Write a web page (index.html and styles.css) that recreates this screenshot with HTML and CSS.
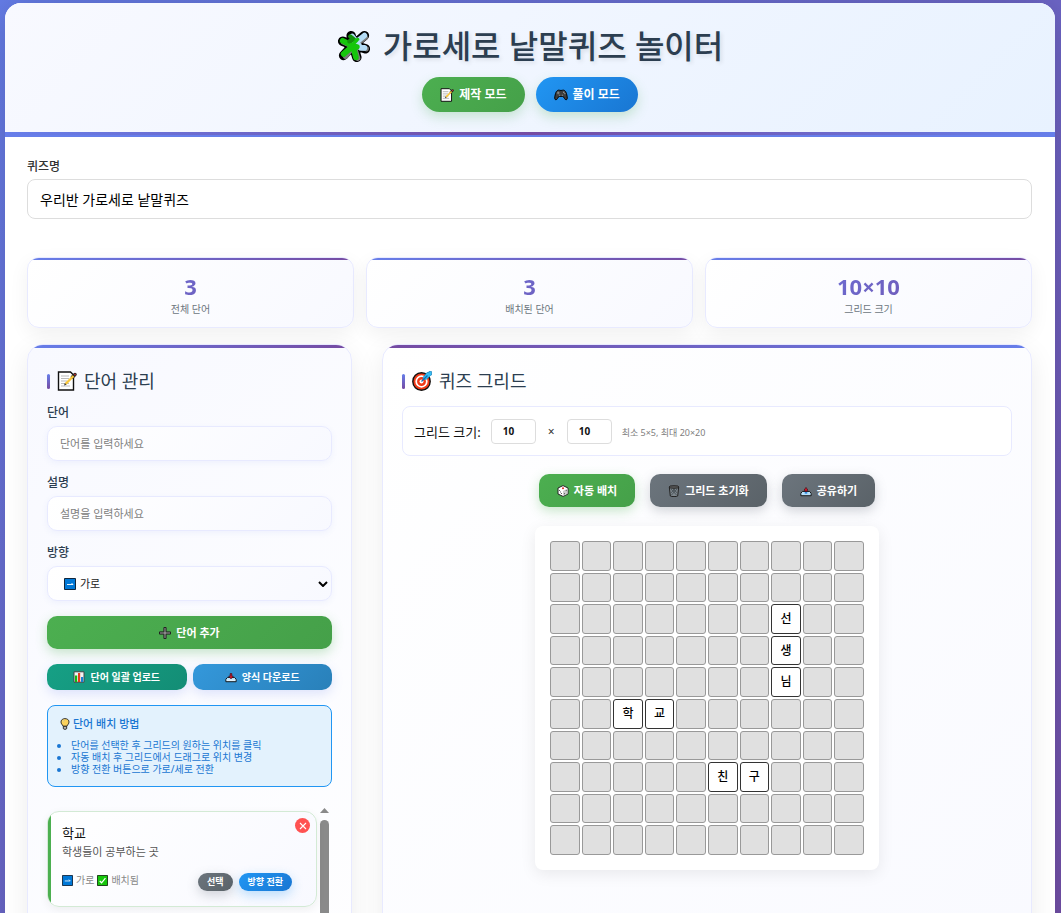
FILE: index.html
```html
<!DOCTYPE html>
<html lang="ko">
<head>
<meta charset="utf-8">
<meta name="viewport" content="width=device-width, initial-scale=1">
<title>가로세로 낱말퀴즈 놀이터</title>
<link rel="stylesheet" href="styles.css">
</head>
<body>
<svg class="defs" aria-hidden="true">
  <symbol id="i-puzzle" viewBox="0 0 36 36">
    <g fill="none" stroke-linecap="round" stroke-linejoin="round">
      <path stroke="#000" stroke-width="10" d="M6 13 17 17 15 7M17 17 29 7M17 17 30 21M17 17 21 30M17 17 7 28"/>
      <path fill="#000" stroke="#000" stroke-width="4" d="M10 13 14 8 26 11 25 22 19 27 10 22Z"/>
      <path stroke="#7a7a7a" stroke-width="5.500" d="M7 14 18 19M18 18 31 21M18 18 22 31M18 18 9 29M18 18 30 9"/>
      <path stroke="#b4dcf5" stroke-width="6" d="M19 15 29 7M20 13 25 20 29 20M16 8 20 13"/>
      <path stroke="#16c60c" stroke-width="6" d="M6 12.500 15 17M17 18 20 30M17 18 7 26.500M14 17 21 19"/>
      <path stroke="#13910c" stroke-width="4.500" d="M14 8 18 11M13 13 16 12"/>
      <path stroke="#16c60c" stroke-width="3.500" d="M20 12 22 11M17 16 21 12"/>
    </g>
  </symbol>
  <symbol id="i-memo" viewBox="0 0 20 20">
    <path fill="#fff" stroke="#111" stroke-width="1.400" d="M1.500 1h12l3 3v15h-15Z"/>
    <path stroke="#bbb" stroke-width="1.200" d="M4 5h8M4 7.500h8M4 10h6M4 12.500h8M4 15h9"/>
    <path stroke="#222" stroke-width="3.400" stroke-linecap="round" d="m18 3.500-2.500 2.500"/>
    <path stroke="#f8c63a" stroke-width="2.400" d="m16.500 5-8 8"/>
    <path fill="#3b3b3b" d="m7 14.500.8-2.500 1.700 1.700Z"/><circle cx="18" cy="3.500" r="1" fill="#a33"/>
  </symbol>
  <symbol id="i-pad" viewBox="0 0 20 16">
    <path fill="#3c3c3c" stroke="#000" stroke-width="1.400" d="M5 1.500c2-1 3 0 5 0s3-1 5 0c2.500 1 4 8 4 11 0 3-3 3-4 .5L13 10H7l-2 3c-1 2.500-4 2.500-4-.5 0-3 1.500-10 4-11Z"/>
    <path stroke="#999" stroke-width="1.200" d="M4 5h4M6 3v4"/><circle cx="14" cy="4" r="1" fill="#aaa"/><circle cx="15.500" cy="6" r="1" fill="#999"/><circle cx="8" cy="8.500" r="1.200" fill="#777"/><circle cx="12" cy="8.500" r="1.200" fill="#777"/>
  </symbol>
  <symbol id="i-target" viewBox="0 0 20 20">
    <circle cx="9.500" cy="10.500" r="8.700" fill="#f03a17" stroke="#111" stroke-width="1.400"/>
    <circle cx="9.500" cy="10.500" r="5.300" fill="#f03a17" stroke="#fff" stroke-width="1.700"/>
    <circle cx="9.500" cy="10.500" r="2" fill="#fff"/>
    <path stroke="#1683c0" stroke-width=".7" fill="#35bdf2" d="m11 6.500 4-5 2 0v-1.200l2.500.2v3.500l-1 .5-4 3.700-3 .3Z"/>
    <path stroke="#0a6fb5" stroke-width="1.300" d="m9.500 10.500 6-6"/>
  </symbol>
  <symbol id="i-right" viewBox="0 0 12 12">
    <path fill="#0078d7" stroke="#10263d" stroke-width="1" d="M.5.5h11v11H.5Z"/>
    <path fill="none" stroke="#fff" stroke-width=".9" d="M3 6.500h6M7.500 5 9 6.500"/>
  </symbol>
  <symbol id="i-check" viewBox="0 0 12 12">
    <path fill="#16c60c" stroke="#10350e" stroke-width="1" d="M.5.5h11v11H.5Z"/>
    <path fill="none" stroke="#fff" stroke-width="1.300" d="m3 6.500 2 2 4.200-5"/>
  </symbol>
  <symbol id="i-plus" viewBox="0 0 12 12">
    <path fill="#8a8a8a" stroke="#222" stroke-width="1" d="M4.900.5h2.200v4.400h4.400v2.200H7.100v4.400H4.900V7.100H.5V4.900h4.400Z"/>
  </symbol>
  <symbol id="i-chart" viewBox="0 0 12 12">
    <path fill="#f4f4f4" stroke="#444" d="M1 .8h10v10.400H1Z"/>
    <path fill="#16b80c" d="M2 4.500h2.200V11H2Z"/><path fill="#e83a1c" d="M5 2h2.200v9H5Z"/><path fill="#1683d8" d="M8 6h2.200v5H8Z"/>
  </symbol>
  <symbol id="i-inbox" viewBox="0 0 14 12">
    <path fill="#b7e0fa" stroke="#111" stroke-width="1.100" stroke-linejoin="round" d="m1 8.500 2-2h8l2 2v3H1Z"/>
    <path fill="#fff" d="M2 9.200h10v1H2Z"/>
    <path fill="#d3162b" stroke="#39060c" stroke-width=".7" d="M6 2h2v3h1.700L7 8.200 4.300 5H6Z"/>
  </symbol>
  <symbol id="i-outbox" viewBox="0 0 14 12">
    <path fill="#b7e0fa" stroke="#111" stroke-width="1.100" stroke-linejoin="round" d="m1 8.500 2-2h8l2 2v3H1Z"/>
    <path fill="#3794e6" d="M5.500 7h3v2.300h-3Z"/>
    <path fill="#d3162b" stroke="#39060c" stroke-width=".7" d="M7 1.800 9.200 5H8.200v1.700H5.800V5H4.800Z"/>
  </symbol>
  <symbol id="i-bulb" viewBox="0 0 10 13">
    <path fill="#fbd25c" stroke="#222" d="M5 .7c5 0 5.200 4.800 2.800 6.800L7 9H3l-.8-1.500C-.2 5.500 0 .7 5 .7Z"/>
    <path fill="#bbb" stroke="#222" d="M3.200 9h3.600v2.600L5 12.400l-1.800-.8Z"/><path stroke="#fff3b8" d="M3 4c0-1 .7-1.800 1.500-2"/>
  </symbol>
  <symbol id="i-dice" viewBox="0 0 12 12">
    <path fill="#fff" stroke="#222" stroke-linejoin="round" d="m6 .6 5 2.400v6L6 11.400 1 9V3Z"/>
    <path fill="#ccc" d="m6 6 4.500-2.500v5.200L6 11Z"/><circle cx="6" cy="3.200" r="1" fill="#e02424"/>
    <path stroke="#333" stroke-linecap="round" d="M2.500 5.500v0M4.500 8.500v0M3.500 7v0M7.500 8.700v0M9.200 5.600v0"/>
  </symbol>
  <symbol id="i-trash" viewBox="0 0 12 12">
    <path fill="#7d868c" stroke="#222" d="m1.300 2 1 9c1.500.8 6 .8 7.400 0l1-9Z"/>
    <ellipse cx="6" cy="2" rx="5" ry="1.400" fill="#555" stroke="#222" stroke-width=".8"/>
    <path stroke="#394247" stroke-width=".7" d="m3 4 5.500 6M5 4l4.300 4M9 4l-5.500 6M7 4 2.800 8"/>
  </symbol>
  <symbol id="i-chevron" viewBox="0 0 10 6"><path fill="none" stroke="#000" stroke-width="2" d="m1 1 4 4 4-4"/></symbol>
  <symbol id="i-close" viewBox="0 0 8 8"><path stroke="#fff" stroke-width="1.100" d="m1 1 6 6M7 1 1 7"/></symbol>
</svg>

<div class="container">
  <header class="header">
    <h1 class="title"><svg class="title-icon" aria-hidden="true"><use href="#i-puzzle"/></svg>가로세로 낱말퀴즈 놀이터</h1>
    <nav class="modes">
      <button class="btn btn-mode green"><svg class="icon-md"><use href="#i-memo"/></svg>제작 모드</button>
      <button class="btn btn-mode blue"><svg class="icon-md"><use href="#i-pad"/></svg>풀이 모드</button>
    </nav>
  </header>

  <main class="content">
    <div class="quiz-name">
      <label class="name-label" for="quizName">퀴즈명</label>
      <input class="name-input" id="quizName" type="text" value="우리반 가로세로 낱말퀴즈">
    </div>

    <section class="stats">
      <div class="stat"><div class="stat-number">3</div><div class="stat-label">전체 단어</div></div>
      <div class="stat"><div class="stat-number">3</div><div class="stat-label">배치된 단어</div></div>
      <div class="stat"><div class="stat-number">10×10</div><div class="stat-label">그리드 크기</div></div>
    </section>

    <div class="workspace">
      <section class="panel words-panel">
        <h2 class="panel-title"><svg class="icon-lg" aria-hidden="true"><use href="#i-memo"/></svg>단어 관리</h2>
        <div class="field">
          <label class="field-label" for="word">단어</label>
          <input class="field-input" id="word" type="text" placeholder="단어를 입력하세요">
        </div>
        <div class="field">
          <label class="field-label" for="clue">설명</label>
          <input class="field-input" id="clue" type="text" placeholder="설명을 입력하세요">
        </div>
        <div class="field">
          <label class="field-label" for="direction">방향</label>
          <div class="select-wrap">
            <select class="field-input direction-select" id="direction"><option>가로</option><option>세로</option></select>
            <svg class="icon-sm select-icon" aria-hidden="true"><use href="#i-right"/></svg>
            <svg class="select-arrow" aria-hidden="true"><use href="#i-chevron"/></svg>
          </div>
        </div>
        <button class="btn green add-word"><svg class="icon-sm"><use href="#i-plus"/></svg>단어 추가</button>
        <div class="bulk">
          <button class="btn btn-bulk teal"><svg class="icon-sm"><use href="#i-chart"/></svg>단어 일괄 업로드</button>
          <button class="btn btn-bulk sky"><svg class="icon-sm"><use href="#i-inbox"/></svg>양식 다운로드</button>
        </div>
        <div class="info">
          <h3 class="info-title"><svg class="icon-sm" aria-hidden="true"><use href="#i-bulb"/></svg>단어 배치 방법</h3>
          <ul class="info-list">
            <li>단어를 선택한 후 그리드의 원하는 위치를 클릭</li>
            <li>자동 배치 후 그리드에서 드래그로 위치 변경</li>
            <li>방향 전환 버튼으로 가로/세로 전환</li>
          </ul>
        </div>
        <div class="list">
          <div class="cards">
            <article class="card">
              <button class="card-close" aria-label="삭제"><svg class="close-icon"><use href="#i-close"/></svg></button>
              <div class="card-word">학교</div>
              <div class="card-clue">학생들이 공부하는 곳</div>
              <div class="card-row">
                <div class="card-meta"><svg class="icon-xs"><use href="#i-right"/></svg>가로<svg class="icon-xs"><use href="#i-check"/></svg>배치됨</div>
                <div class="card-actions"><button class="btn btn-tiny gray">선택</button><button class="btn btn-tiny blue">방향 전환</button></div>
              </div>
            </article>
          </div>
          <div class="scrollbar" aria-hidden="true"><span class="scroll-up"></span><span class="scroll-thumb"></span></div>
        </div>
      </section>

      <section class="panel grid-panel">
        <h2 class="panel-title"><svg class="icon-lg" aria-hidden="true"><use href="#i-target"/></svg>퀴즈 그리드</h2>
        <div class="size-box">
          <label class="size-label" for="rows">그리드 크기:</label>
          <input class="size-input" id="rows" type="text" inputmode="numeric" value="10">
          <span class="times">×</span>
          <input class="size-input" id="cols" type="text" inputmode="numeric" aria-label="열 수" value="10">
          <span class="size-hint">최소 5×5, 최대 20×20</span>
        </div>
        <div class="tools">
          <button class="btn green"><svg class="icon-sm"><use href="#i-dice"/></svg>자동 배치</button>
          <button class="btn gray"><svg class="icon-sm"><use href="#i-trash"/></svg>그리드 초기화</button>
          <button class="btn gray"><svg class="icon-sm"><use href="#i-outbox"/></svg>공유하기</button>
        </div>
        <div class="board" id="board"></div>
      </section>
    </div>
  </main>
</div>
<script src="script.js"></script>
</body>
</html>
```
FILE: styles.css
```css
* { box-sizing: border-box; }
body {
  margin: 0;
  min-height: 100vh;
  padding: 3px 6px 20px 5px;
  background: linear-gradient(135deg, #667eea 0%, #764ba2 100%);
  font-family: "Noto Sans", "Noto Sans CJK KR", sans-serif;
  font-size: 12px;
  color: #333;
}
button, input, select { font-family: inherit; }
h1, h2, h3, ul { margin: 0; padding: 0; }
.defs { position: absolute; width: 0; height: 0; }
.container {
  background: #fff;
  border-radius: 16px;
  overflow: hidden;
  box-shadow: 0 0 40px rgba(0, 0, 0, 0.2);
}

.header {
  padding-top: 20px;
  text-align: center;
  background: linear-gradient(135deg, #f8f9ff 0%, #e8f2ff 100%);
  border-bottom: 2px solid #667eea;
}
.header::after {
  content: "";
  display: block;
  height: 3px;
  margin-top: 20px;
  background: linear-gradient(90deg, #667eea, #764ba2, #667eea);
}
.title {
  display: flex;
  justify-content: center;
  align-items: center;
  gap: 12px;
  font-size: 32px;
  line-height: 46px;
  font-weight: 500;
  color: #2c3e50;
  text-shadow: 2px 2px 4px rgba(0, 0, 0, 0.1);
}
.title-icon { width: 34px; height: 34px; }
.modes {
  display: flex;
  justify-content: center;
  gap: 11px;
  margin-top: 8px;
}

.btn {
  display: flex;
  justify-content: center;
  align-items: center;
  gap: 5px;
  height: 33px;
  padding: 0 18px;
  border: 0;
  border-radius: 10px;
  color: #fff;
  font-size: 11px;
  line-height: 16px;
  font-weight: 700;
  white-space: nowrap;
}
.btn-mode {
  height: 35px;
  border-radius: 18px;
  font-size: 12px;
}
.modes .btn { box-shadow: 0 5px 12px rgba(76, 175, 80, 0.25); }
.green {
  background: linear-gradient(135deg, #4caf50, #45a049);
  box-shadow: 0 4px 12px rgba(76, 175, 80, 0.3);
}
.blue {
  background: linear-gradient(135deg, #2196f3, #1976d2);
  box-shadow: 0 4px 12px rgba(33, 150, 243, 0.3);
}
.gray {
  background: linear-gradient(135deg, #6c757d, #5a6268);
  box-shadow: 0 4px 12px rgba(108, 117, 125, 0.3);
}
.teal { background: linear-gradient(135deg, #16a085, #138d75); }
.sky { background: linear-gradient(135deg, #3498db, #2980b9); }
.icon-lg { width: 20px; height: 20px; }
.icon-md { width: 14px; height: 14px; }
.icon-sm { width: 12px; height: 12px; }
.icon-xs { width: 11px; height: 11px; }

.content { padding: 20px 23px 22px 22px; }
.name-label {
  display: block;
  margin-bottom: 2px;
  font-size: 12px;
  line-height: 20px;
  font-weight: 500;
}
.name-input {
  display: block;
  width: 100%;
  height: 40px;
  padding: 0 12px;
  border: 1px solid #ddd;
  border-radius: 8px;
  background: #fff;
  color: #000;
  font-size: 14px;
}

.stats {
  display: grid;
  grid-template-columns: repeat(3, 1fr);
  gap: 12px;
  margin: 38px 0 16px;
}
.stat {
  position: relative;
  overflow: hidden;
  padding: 14px 10px 10px;
  border: 1px solid #e8eaff;
  border-radius: 12px;
  background: linear-gradient(135deg, #fff, #f8f9ff);
  box-shadow: 0 6px 20px rgba(0, 0, 0, 0.06);
  text-align: center;
}
.stat::before {
  content: "";
  position: absolute;
  inset: 0 0 auto;
  height: 2px;
  background: linear-gradient(90deg, #667eea, #764ba2);
}
.stat-number {
  font-size: 22px;
  line-height: 28px;
  font-weight: 700;
  background: linear-gradient(135deg, #667eea, #764ba2);
  background-clip: text;
  -webkit-background-clip: text;
  color: transparent;
}
.stat-label {
  margin-top: 1px;
  font-size: 10px;
  line-height: 16px;
  color: #6c757d;
}

.workspace {
  display: grid;
  grid-template-columns: 1fr 2fr;
  gap: 30px;
}
.panel {
  position: relative;
  overflow: hidden;
  min-width: 0;
  padding: 22px 19px 19px;
  border: 1px solid #e8eaff;
  border-radius: 16px;
}
.workspace .panel { box-shadow: 0 8px 28px rgba(0, 0, 0, 0.08); }
.panel::before {
  content: "";
  position: absolute;
  inset: 0 0 auto;
  height: 3px;
  background: linear-gradient(90deg, #667eea, #764ba2);
}
.words-panel { background: linear-gradient(135deg, #f8f9ff, #fff); }
.grid-panel { background: linear-gradient(135deg, #fff, #f8f9ff); }
.grid-panel::before { background: linear-gradient(90deg, #764ba2, #667eea); }
.panel-title {
  display: flex;
  align-items: center;
  gap: 7px;
  font-size: 18px;
  line-height: 28px;
  font-weight: 400;
  color: #2c3e50;
}
.panel-title::before {
  content: "";
  width: 3px;
  height: 15px;
  border-radius: 2px;
  background: linear-gradient(180deg, #667eea, #764ba2);
}

.field { margin-top: 12px; }
.panel-title + .field { margin-top: 8px; }
.field-label {
  display: block;
  margin-bottom: 3px;
  font-size: 12px;
  line-height: 20px;
  font-weight: 500;
  color: #2c3e50;
}
.field-input {
  display: block;
  width: 100%;
  height: 35px;
  padding: 0 12px;
  border: 1px solid #e8eaff;
  border-radius: 10px;
  background: linear-gradient(135deg, #fff, #f8f9ff);
  box-shadow: 0 2px 6px rgba(102, 126, 234, 0.08);
  color: #222;
  font-size: 11px;
}
.field-input::placeholder { color: #808080; }
.select-wrap { position: relative; }
.direction-select {
  appearance: none;
  padding-left: 32px;
}
.select-icon, .select-arrow {
  position: absolute;
  top: 0;
  bottom: 0;
  margin: auto 0;
  pointer-events: none;
}
.select-icon { left: 17px; }
.select-arrow { right: 4px; width: 10px; height: 6px; }
.add-word { width: 100%; margin-top: 15px; }
.bulk {
  display: grid;
  grid-template-columns: 1fr 1fr;
  gap: 6px;
  margin-top: 15px;
}
.btn-bulk {
  height: 26px;
  padding: 0 8px;
  font-size: 10px;
  box-shadow: 0 4px 12px rgba(102, 126, 234, 0.2);
}

.info {
  margin-top: 15px;
  padding: 10px 11px 11px;
  border: 1px solid #2196f3;
  border-radius: 8px;
  background: #e3f2fd;
  color: #1976d2;
}
.info-title {
  display: flex;
  align-items: center;
  gap: 2px;
  font-size: 11px;
  line-height: 16px;
  font-weight: 500;
}
.info-list {
  margin-top: 7px;
  padding-left: 12px;
  font-size: 10px;
  line-height: 12px;
}

.list {
  display: flex;
  gap: 3px;
  height: 320px;
  margin-top: 18px;
  padding-right: 3px;
}
.cards { flex: 1; padding-top: 6px; }
.card {
  position: relative;
  padding: 12px 24px 15px 14px;
  border: 1px solid #d3ead5;
  border-radius: 12px;
  background: linear-gradient(135deg, #fff, #f8f9ff);
  box-shadow: 0 3px 10px rgba(0, 0, 0, 0.06);
  overflow: hidden;
}
.card::before {
  content: "";
  position: absolute;
  inset: 0 auto 0 0;
  width: 3px;
  background: #4caf50;
}
.card-close {
  position: absolute;
  top: 6px;
  right: 6px;
  display: grid;
  place-items: center;
  width: 15px;
  height: 15px;
  padding: 0;
  border: 0;
  border-radius: 50%;
  background: #ff5252;
}
.close-icon { width: 8px; height: 8px; }
.card-word {
  font-size: 13px;
  line-height: 18px;
  font-weight: 400;
  color: #111;
}
.card-clue {
  font-size: 11px;
  line-height: 20px;
  color: #555;
}
.card-row {
  display: flex;
  justify-content: space-between;
  margin-top: 11px;
}
.card-meta {
  display: flex;
  align-items: center;
  gap: 3px;
  height: 14px;
  font-size: 10px;
  line-height: 14px;
  color: #888;
}
.card-actions { display: flex; gap: 6px; }
.btn-tiny {
  height: 18px;
  padding: 0 9px;
  border-radius: 9px;
  font-size: 9px;
}
.scrollbar {
  display: flex;
  flex-direction: column;
  width: 9px;
  padding-top: 3px;
}
.scroll-up {
  height: 5px;
  background: #8a8a8a;
  clip-path: polygon(50% 0, 100% 100%, 0 100%);
}
.scroll-thumb {
  height: 200px;
  margin-top: 7px;
  border-radius: 5px;
  background: #8a8a8a;
}

.size-box {
  display: flex;
  align-items: center;
  gap: 10px;
  min-height: 50px;
  margin-top: 11px;
  padding: 0 11px;
  border: 1px solid #e8eaff;
  border-radius: 8px;
  background: #fff;
}
.size-label { font-size: 13px; color: #111; }
.size-input {
  width: 45px;
  height: 25px;
  padding: 0 11px;
  border: 1px solid #ddd;
  border-radius: 4px;
  background: #fff;
  color: #111;
  font-size: 10px;
  font-weight: 700;
}
.times { width: 11px; text-align: center; }
.size-hint { padding-top: 4px; font-size: 9px; line-height: 12px; color: #808080; }
.tools {
  display: flex;
  justify-content: center;
  flex-wrap: wrap;
  gap: 15px;
  margin-top: 18px;
}
.board {
  display: grid;
  grid-template-columns: repeat(10, 1fr);
  gap: 2px;
  width: 344px;
  max-width: 100%;
  margin: 19px auto 0;
  padding: 15px;
  border-radius: 8px;
  background: #fff;
  box-shadow: 0 4px 16px rgba(0, 0, 0, 0.08);
}
.cell {
  display: grid;
  place-items: center;
  aspect-ratio: 1;
  min-width: 0;
  border: 1px solid #999;
  border-radius: 3px;
  background: #e0e0e0;
  color: #000;
  font-size: 12px;
  line-height: 18px;
  font-weight: 500;
}
.cell.filled { border-color: #333; background: #fff; }
```
FILE: script.js
```js
const letters = {
  "2,7": "선", "3,7": "생", "4,7": "님",
  "5,2": "학", "5,3": "교",
  "7,5": "친", "7,6": "구"
};
const board = document.getElementById("board");
for (let r = 0; r < 10; r++) {
  for (let c = 0; c < 10; c++) {
    const cell = document.createElement("div");
    const letter = letters[r + "," + c];
    cell.className = letter ? "cell filled" : "cell";
    cell.textContent = letter || "";
    board.appendChild(cell);
  }
}
```
